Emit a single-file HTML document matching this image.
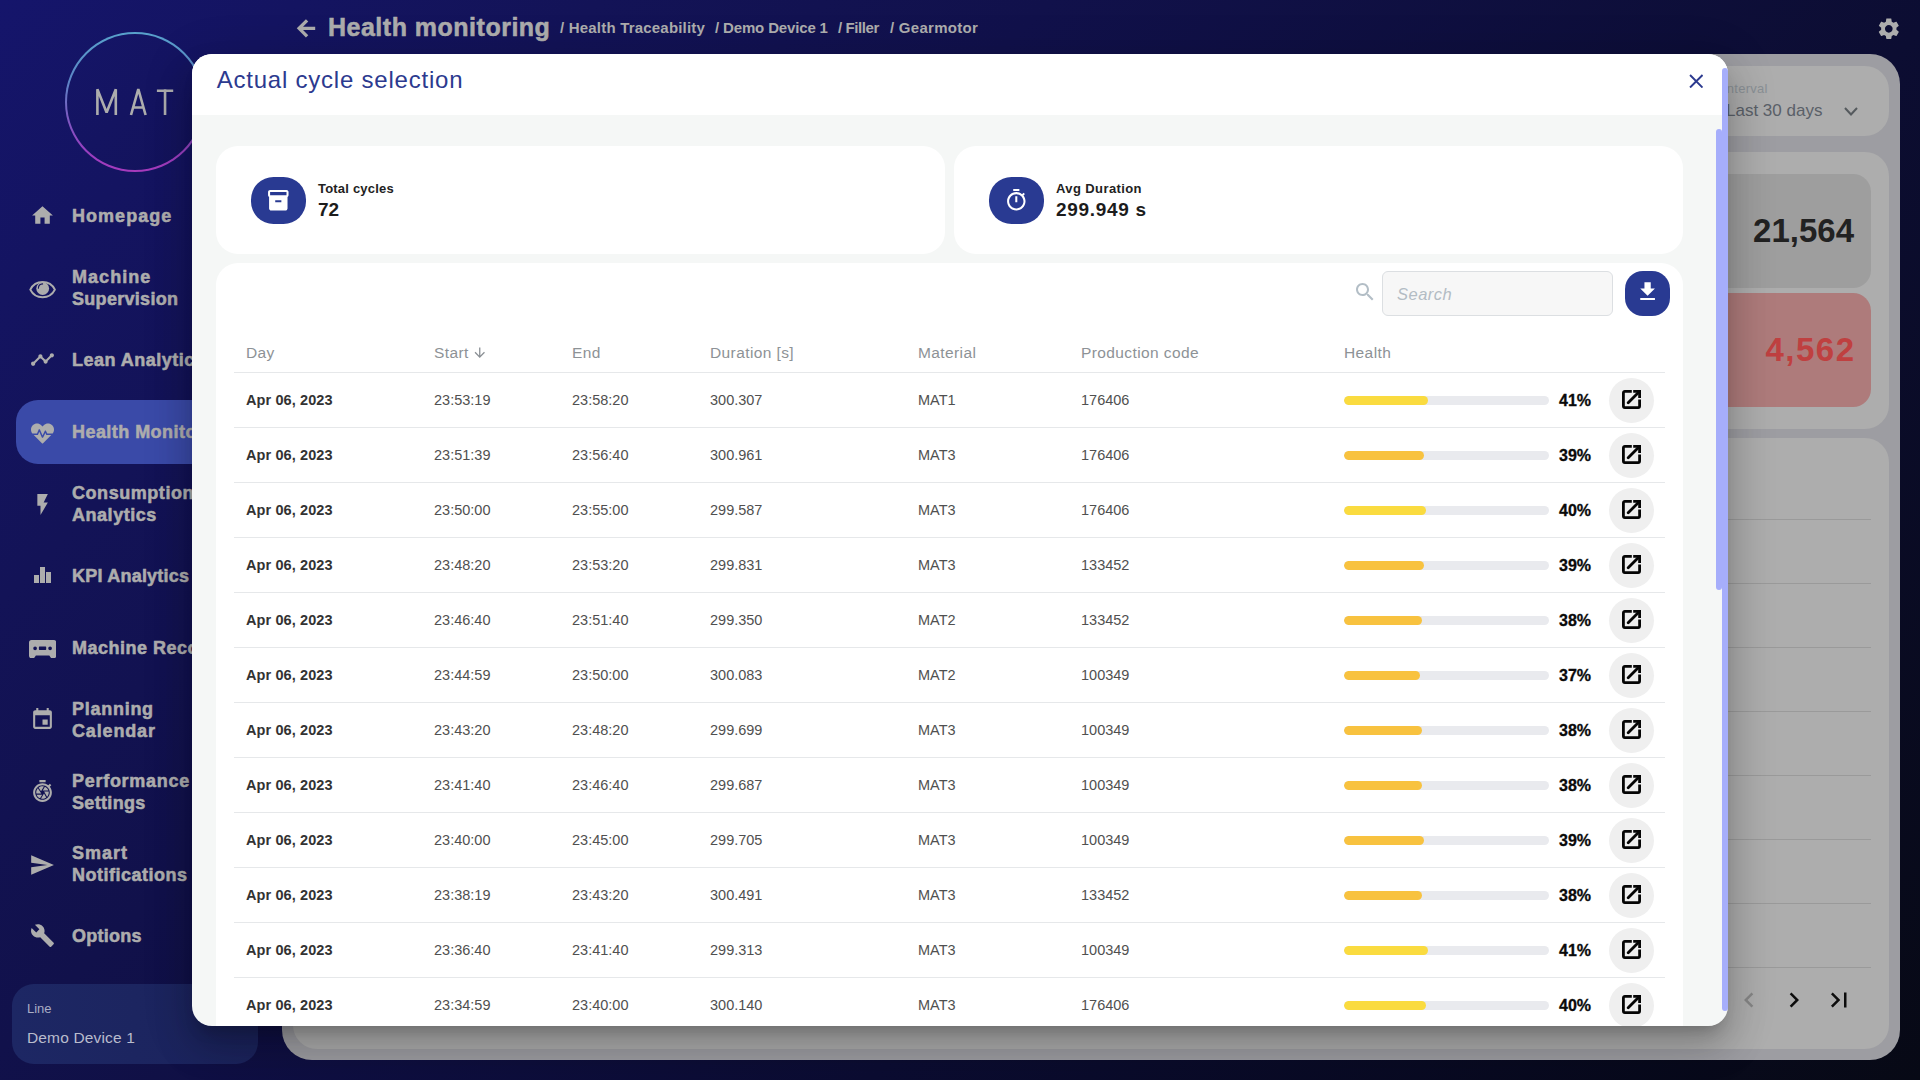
<!DOCTYPE html>
<html lang="en">
<head>
<meta charset="utf-8">
<title>Health monitoring</title>
<style>
*{box-sizing:border-box;margin:0;padding:0}
html,body{width:1920px;height:1080px;overflow:hidden}
body{font-family:"Liberation Sans",sans-serif;position:relative;
 background:linear-gradient(135deg,#15156b 0%,#131357 20%,#11114b 35%,#0c0d32 65%,#070915 100%)}
svg{display:block}
/* sidebar */
.logo{position:absolute;left:65px;top:32px;width:140px;height:140px;border-radius:50%;
 background:linear-gradient(180deg,#58a2cc 0%,#5c86c6 35%,#7b5cc2 60%,#983fc0 85%,#a63abc 100%)}
.logo i{position:absolute;left:1.800px;top:1.800px;right:1.800px;bottom:1.800px;border-radius:50%;background:linear-gradient(135deg,#151568,#13135a)}
.mat{position:absolute;left:89px;top:80px;width:100px;height:40px}
.nav{position:absolute;left:16px;width:260px;height:64px;color:#adadad}
.nav.act{background:#3a4aa8;border-radius:22px}
.nav svg{position:absolute;left:13.500px;top:18.500px;width:25px;height:25px;fill:#adadad}
.nav svg.equalizer{left:14px;top:19px;width:24px;height:24px}
.nav svg.eye{left:12.900px;top:24.800px;width:27.200px;height:18px}
.nav svg.heart{left:15px;top:21.500px;width:23px;height:23px}
.nav svg.flash{left:13.650px;top:19.900px;width:25.200px;height:25.200px}
.nav svg.send{left:12.860px;top:20.350px;width:26px;height:26px}
.nav svg.home{left:14.300px}
.nav svg.tape{left:12.900px;top:23.900px;width:27.200px;height:18.300px}
.nav u{text-decoration:none}
.nav b{position:absolute;left:56px;white-space:nowrap;font-weight:700;font-size:18px;line-height:22px;-webkit-text-stroke:.55px #adadad}
.nav b.one{top:21px}
.nav b.two{top:10px}
.line{position:absolute;left:12px;top:984px;width:246px;height:80px;border-radius:22px;background:linear-gradient(90deg,#1d2764,#1b235c)}
.line small{position:absolute;left:15px;top:17px;font-size:13px;color:#a9adc4}
.line span{position:absolute;left:15px;top:45px;font-size:15.500px;letter-spacing:.15px;color:#b9bccd;white-space:nowrap}
/* topbar */
.top{position:absolute;left:0;top:0;height:54px;width:1920px;color:#adadad}
.top svg{position:absolute;fill:#adadad}
.top h1{position:absolute;left:328px;top:12px;font-size:25px;line-height:30px;font-weight:700;white-space:nowrap;letter-spacing:.5px;-webkit-text-stroke:.55px #adadad}
.top .bc{position:absolute;top:19px;font-size:15px;line-height:18px;font-weight:700;white-space:nowrap}
/* dimmed main */
.main{position:absolute;left:282px;top:54px;width:1618px;height:1006px;border-radius:30px;background:#9d9da2}
.card{position:absolute;background:#adadad;border-radius:24px}
.card svg{position:absolute;width:30px;height:30px}
.ilab{position:absolute;left:1430px;top:15px;font-size:13px;color:#8a9095;letter-spacing:.25px}
.ival{position:absolute;left:1433px;top:35px;font-size:17px;color:#5a6068;white-space:nowrap}
.card svg.ichev{left:1551px;top:41px;width:14px;height:9px}
.kpi{position:absolute;left:1000px;width:578px;height:114px;border-radius:18px}
.kpi.g{top:22px;background:#9e9e9e}
.kpi.r{top:141px;background:#ae7b7b}
.kpi b{position:absolute;right:17px;top:37px;font-size:33px;line-height:40px;font-weight:700;color:#222;white-space:nowrap}
.kpi.r b{color:#bf4040;letter-spacing:1.500px;right:15.500px}
.pl{position:absolute;left:0;width:1578px;height:1px;background:#9a9a9a}
/* modal */
.mshadow{position:absolute;left:192px;top:54px;width:1536px;height:972px;border-radius:20px;box-shadow:0 11px 15px -7px rgba(0,0,0,.2),0 24px 38px 3px rgba(0,0,0,.14),0 9px 46px 8px rgba(0,0,0,.12)}
.modal{position:absolute;left:192px;top:54px;width:1536px;height:972px;border-radius:20px;background:#f5f7f6;overflow:hidden}
.mhead{position:absolute;left:0;top:0;width:100%;height:61px;background:#fff}
.mhead h2{position:absolute;left:24.700px;top:11px;font-size:24px;line-height:30px;font-weight:400;color:#2c3a8f;white-space:nowrap;letter-spacing:.78px}
.mhead svg.x{position:absolute;left:1496.600px;top:19.700px;width:14.600px;height:14.600px}
.stat{position:absolute;top:92px;width:729px;height:108px;background:#fff;border-radius:22px}
.stat .ic{position:absolute;left:35px;top:31px;width:55px;height:47px;border-radius:22.500px;background:#293a92}
.stat .ic svg{position:absolute;left:15.200px;top:11px;width:24.600px;height:24.600px;fill:#fff}
.stat .t{position:absolute;left:102px;top:35px;font-size:13px;line-height:16px;font-weight:700;color:#222;white-space:nowrap;letter-spacing:.2px}
.stat .v{position:absolute;left:102px;top:53px;font-size:19px;line-height:22px;font-weight:700;color:#1c1c1c;white-space:nowrap}
.stat .v.w{letter-spacing:.7px}
.stat .t.w{letter-spacing:.4px}
.tbl{position:absolute;left:24px;top:209px;width:1467px;height:800px;background:#fff;border-radius:22px 22px 0 0}
.inp{position:absolute;left:1166px;top:8px;width:231px;height:45px;border:1px solid #dcdfe2;border-radius:6px;background:#f7f7f7}
.inp em{position:absolute;left:14px;top:11.600px;letter-spacing:.5px;font-size:16.500px;line-height:20px;color:#b3bcc4;font-style:italic}
.dl{position:absolute;left:1409px;top:8px;width:45px;height:45px;border-radius:18px;background:#293a92}
.dl svg{position:absolute;left:10.100px;top:8.300px;width:25.200px;height:25.200px;fill:#fff}
.hr{position:absolute;left:18px;width:1431px;height:1px;background:#e6e8ea}
.th{position:absolute;top:81px;font-size:15.500px;line-height:18px;color:#8d9296;white-space:nowrap;letter-spacing:.4px}
.row{position:absolute;left:0;width:1467px;height:55px}
.row span{position:absolute;top:18px;font-size:14.5px;line-height:18px;color:#505050;white-space:nowrap}
.row .d{left:30px;font-weight:700;color:#333;letter-spacing:.1px}
.row .bar{position:absolute;left:1128px;top:23px;width:205px;height:9px;border-radius:5px;background:#e9eaee;overflow:hidden}
.row .bar i{position:absolute;left:0;top:0;height:9px;border-radius:5px}
.row .p{left:1343px;top:19px;font-weight:700;font-size:16px;color:#0a0a0a;-webkit-text-stroke:.3px #0a0a0a}
.row .btn{position:absolute;left:1393px;top:5px;width:45px;height:45px;border-radius:50%;background:#efefef}
.row .btn svg{position:absolute;left:13px;top:11.700px;width:19px;height:19px}
.sb1{position:absolute;left:1722px;top:68px;width:6px;height:943px;border-radius:3px;background:#a6aefb}
.sb2{position:absolute;left:1524px;top:75px;width:6px;height:461px;border-radius:3px;background:#a6aefb}

</style>
</head>
<body>
<div class="logo"><i></i></div><svg class="mat" viewBox="0 0 100 40"><path d="M8.400 35V9.200L17.600 32.500 26.800 9.200V35M42 35L49.300 9.200 56.600 35M44.300 27.500H54.300M67.900 10.700H84.200M76.050 9.200V35" fill="none" stroke="#adadad" stroke-width="2.600" stroke-linejoin="bevel"/></svg>
<div class="nav" style="top:184px"><svg class="home" viewBox="0 0 24 24" style=""><path d="M10 20v-6h4v6h5v-8h3L12 3 2 12h3v8z"/></svg><b class="one" style="letter-spacing:1.04px">Homepage</b></div>
<div class="nav" style="top:256px"><svg class="fa eye" viewBox="0 0 27.200 18"><path d="M1.300 8.600A13.760 13.760 0 0 1 25.900 8.600A13.760 13.760 0 0 1 1.300 8.600z" fill="none" stroke="#adadad" stroke-width="2" stroke-linejoin="round"/><circle cx="13.700" cy="7.500" r="6.400" stroke="none"/><path d="M9.400 7.200A4.400 4.400 0 0 1 13.600 2.900" fill="none" stroke="#14145c" stroke-width="1.100" stroke-linecap="round"/></svg><b class="two"><u style="letter-spacing:1.05px">Machine</u><br><u style="letter-spacing:0.3px">Supervision</u></b></div>
<div class="nav" style="top:328px"><svg class="timeline" viewBox="0 0 24 24" style=""><path d="M23 8c0 1.1-.9 2-2 2-.18 0-.35-.02-.51-.07l-3.56 3.55c.05.16.07.34.07.52 0 1.1-.9 2-2 2s-2-.9-2-2c0-.18.02-.36.07-.52l-2.55-2.55c-.16.05-.34.07-.52.07s-.36-.02-.52-.07l-4.55 4.56c.05.16.07.33.07.51 0 1.1-.9 2-2 2s-2-.9-2-2 .9-2 2-2c.18 0 .35.02.51.07l4.56-4.55C8.020 9.360 8 9.180 8 9c0-1.100.900-2 2-2s2 .900 2 2c0 .180-.020.360-.070.520l2.550 2.550c.160-.050.340-.070.520-.070s.360.020.520.070l3.550-3.560C19.020 8.350 19 8.180 19 8c0-1.100.900-2 2-2s2 .900 2 2z"/></svg><b class="one" style="letter-spacing:0.5px">Lean Analytics</b></div>
<div class="nav act" style="top:400px"><svg class="fa heart" viewBox="0 0 512 512"><path d="M320.200 243.800l-49.700 99.400c-6 12.100-23.400 11.700-28.900-.600l-56.900-126.300-30 71.700H60.600l182.500 186.500c7.100 7.300 18.600 7.300 25.700 0L451.400 288H342.300l-22.100-44.200zM473.700 73.900l-2.400-2.500c-51.500-52.600-135.800-52.600-187.400 0L256 100l-27.900-28.500c-51.500-52.700-135.900-52.700-187.400 0l-2.400 2.400C-10.400 123.700-12.500 203 31 256h102.400l35.900-86.200c5.400-12.900 23.600-13.200 29.400-.400l58.200 129.300 49-97.900c5.900-11.800 22.700-11.800 28.600 0l27.600 55.200H481c43.500-53 41.400-132.300-7.300-182.100z"/></svg><b class="one" style="letter-spacing:0.45px">Health Monitoring</b></div>
<div class="nav" style="top:472px"><svg class="flash" viewBox="0 0 24 24" style=""><path d="M7 2v11h3v9l7-12h-4l4-8z"/></svg><b class="two"><u style="letter-spacing:0.55px">Consumption</u><br><u style="letter-spacing:0.54px">Analytics</u></b></div>
<div class="nav" style="top:544px"><svg class="equalizer" viewBox="0 0 24 24" style=""><path d="M4 12h5v8H4zM10 4h5v16h-5zM16 9h5v11h-5z"/></svg><b class="one" style="letter-spacing:0.22px">KPI Analytics</b></div>
<div class="nav" style="top:616px"><svg class="fa tape" viewBox="0 0 27.200 18.300"><path fill-rule="evenodd" d="M2.500 0H24.700A2.500 2.500 0 0 1 27.200 2.500V15.800A2.500 2.500 0 0 1 24.700 18.300H23a1.500 1.500 0 0 1-1.300-.8L20.300 15.500H6.900L5.500 17.500a1.500 1.500 0 0 1-1.300.8H2.500A2.500 2.500 0 0 1 0 15.800V2.500A2.500 2.500 0 0 1 2.500 0zM6.100 6.450a1.850 1.850 0 1 0 0 3.700 1.850 1.850 0 0 0 0-3.700zM21.100 6.450a1.850 1.850 0 1 0 0 3.700 1.850 1.850 0 0 0 0-3.700zM10.500 6.600h6.100a.6.600 0 0 1 .6.600v2.150a.6.600 0 0 1-.6.600h-6.100a.6.600 0 0 1-.6-.6V7.200a.6.600 0 0 1 .6-.6z"/></svg><b class="one" style="letter-spacing:0.5px">Machine Recorder</b></div>
<div class="nav" style="top:688px"><svg class="event" viewBox="0 0 24 24" style=""><path d="M17 12h-5v5h5v-5zM16 1v2H8V1H6v2H5c-1.11 0-1.99.9-1.990 2L3 19c0 1.100.890 2 2 2h14c1.100 0 2-.900 2-2V5c0-1.100-.900-2-2-2h-1V1h-2zm3 18H5V8h14v11z"/></svg><b class="two"><u style="letter-spacing:0.73px">Planning</u><br><u style="letter-spacing:0.84px">Calendar</u></b></div>
<div class="nav" style="top:760px"><svg class="shutter" viewBox="0 0 24 24" style=""><path d="M15 1H9v2h6V1zm4.030 6.390l1.420-1.420c-.430-.510-.900-.990-1.410-1.410l-1.420 1.420C16.070 4.740 14.120 4 12 4c-4.970 0-9 4.030-9 9s4.020 9 9 9 9-4.030 9-9c0-2.120-.740-4.070-1.970-5.610zM12 20c-3.870 0-7-3.130-7-7s3.130-7 7-7 7 3.130 7 7-3.130 7-7 7zm-.320-5H6.350c.570 1.620 1.820 2.920 3.410 3.560l-.110-.060 2.030-3.500zm5.970-4c-.570-1.600-1.780-2.890-3.340-3.540L12.260 11h5.390zm-7.040 7.830c.450.110.910.170 1.390.170 1.340 0 2.570-.450 3.570-1.190l-2.110-3.900-2.850 4.920zM7.550 8.990C6.590 10.050 6 11.460 6 13c0 .340.040.670.090 1h4.720L7.550 8.990zm8.790 8.140C17.370 16.060 18 14.600 18 13c0-.340-.040-.670-.090-1h-4.340l2.770 5.130zm-3.010-9.980C12.900 7.060 12.460 7 12 7c-1.400 0-2.690.490-3.710 1.290l2.320 3.560 2.720-4.700z"/></svg><b class="two"><u style="letter-spacing:0.72px">Performance</u><br><u style="letter-spacing:0.33px">Settings</u></b></div>
<div class="nav" style="top:832px"><svg class="send" viewBox="0 0 24 24" style=""><path d="M2.010 21L23 12 2.010 3 2 10l15 2-15 2z"/></svg><b class="two"><u style="letter-spacing:1.0px">Smart</u><br><u style="letter-spacing:0.5px">Notifications</u></b></div>
<div class="nav" style="top:904px"><svg class="build" viewBox="0 0 24 24" style=""><path d="M22.700 19l-9.100-9.100c.900-2.300.400-5-1.500-6.900-2-2-5-2.400-7.400-1.300L9 6 6 9 1.600 4.700C.400 7.100.900 10.100 2.900 12.100c1.900 1.900 4.600 2.400 6.900 1.500l9.100 9.100c.400.400 1 .400 1.400 0l2.300-2.300c.500-.400.500-1.100.100-1.400z"/></svg><b class="one" style="letter-spacing:0.25px">Options</b></div>
<div class="line"><small>Line</small><span>Demo Device 1</span></div>
<div class="top"><svg viewBox="0 0 32 32" style="left:290px;top:12px;width:32px;height:32px"><path d="M17.100 8.300L9.100 16.300 17.100 24.300M9.500 16.300H25.200" fill="none" stroke="#adadad" stroke-width="3.300"/></svg><h1>Health monitoring</h1><span class="bc" style="left:560px;letter-spacing:.2px">/ Health Traceability</span><span class="bc" style="left:715px;letter-spacing:-.15px">/ Demo Device 1</span><span class="bc" style="left:838px;letter-spacing:-.4px">/ Filler</span><span class="bc" style="left:890px;letter-spacing:.27px">/ Gearmotor</span><svg viewBox="0 0 24 24" style="left:1875.600px;top:15.500px;width:25.600px;height:25.600px"><path d="M19.140 12.940c.040-.300.060-.610.060-.940 0-.320-.020-.640-.070-.940l2.030-1.580c.180-.140.230-.410.120-.610l-1.920-3.320c-.120-.220-.370-.290-.590-.220l-2.390.960c-.500-.380-1.030-.700-1.620-.940l-.360-2.540c-.040-.240-.240-.410-.480-.410h-3.840c-.240 0-.430.170-.470.410l-.360 2.540c-.590.240-1.130.570-1.620.940l-2.390-.960c-.220-.080-.470 0-.590.220L2.740 8.870c-.120.210-.080.470.120.610l2.030 1.580c-.050.300-.090.630-.090.940s.020.640.070.940l-2.030 1.580c-.180.140-.230.410-.120.610l1.920 3.320c.120.220.370.290.590.220l2.390-.960c.500.380 1.030.700 1.620.940l.360 2.540c.050.240.240.410.480.410h3.840c.240 0 .440-.170.470-.410l.360-2.540c.590-.240 1.130-.560 1.620-.940l2.390.960c.220.080.470 0 .590-.220l1.920-3.320c.120-.220.070-.470-.120-.610l-2.010-1.580zM12 15.600c-1.980 0-3.600-1.620-3.600-3.600s1.620-3.600 3.600-3.600 3.600 1.620 3.600 3.600-1.620 3.600-3.600 3.600z"/></svg></div>
<div class="main">
<div class="card" style="left:11px;top:12px;width:1596px;height:70px"><small class="ilab">Interval</small><span class="ival">Last 30 days</span><svg class="ichev" viewBox="0 0 14 9"><path d="M1 1l6 6.500L13 1" fill="none" stroke="#555a5e" stroke-width="2"/></svg></div>
<div class="card" style="left:11px;top:98px;width:1596px;height:277px"><div class="kpi g"><b>21,564</b></div><div class="kpi r"><b>4,562</b></div></div>
<div class="card" style="left:11px;top:384px;width:1596px;height:611px">
<i class="pl" style="top:81px"></i>
<i class="pl" style="top:145px"></i>
<i class="pl" style="top:209px"></i>
<i class="pl" style="top:273px"></i>
<i class="pl" style="top:337px"></i>
<i class="pl" style="top:401px"></i>
<i class="pl" style="top:465px"></i>
<i class="pl" style="top:529px"></i>
<svg viewBox="0 0 24 24" style="left:1441px;top:547px;fill:#868686"><path d="M15.410 7.410L14 6l-6 6 6 6 1.410-1.410L10.830 12z"/></svg><svg viewBox="0 0 24 24" style="left:1486px;top:547px;fill:#0c0c0c"><path d="M10 6L8.590 7.410 13.170 12l-4.580 4.590L10 18l6-6z"/></svg><svg viewBox="0 0 24 24" style="left:1531px;top:547px;fill:#0c0c0c"><path d="M5.590 7.410L10.180 12l-4.590 4.590L7 18l6-6-6-6zM16 6h2v12h-2z"/></svg>
</div></div>
<div class="mshadow"></div>
<div class="modal">
<div class="mhead"><h2>Actual cycle selection</h2><svg class="x" viewBox="0 0 14 14"><path d="M1 1l12 12M13 1L1 13" fill="none" stroke="#2c3a8f" stroke-width="1.850"/></svg></div>
<div class="stat" style="left:24px"><div class="ic"><svg viewBox="0 0 24 24" style=""><path d="M20 2H4c-1 0-2 .9-2 2v3.010c0 .720.430 1.340 1 1.690V20c0 1.100 1.100 2 2 2h14c.900 0 2-.900 2-2V8.700c.570-.350 1-.970 1-1.690V4c0-1.100-1-2-2-2zm-5 12H9v-2h6v2zm5-7H4V4h16v3z"/></svg></div><div class="t">Total cycles</div><div class="v">72</div></div>
<div class="stat" style="left:762px"><div class="ic"><svg viewBox="0 0 24 24" style=""><path d="M15 1H9v2h6V1zm-4 13h2V8h-2v6zm8.030-6.610l1.420-1.420c-.430-.510-.900-.990-1.410-1.410l-1.420 1.420C16.070 4.740 14.120 4 12 4c-4.970 0-9 4.030-9 9s4.020 9 9 9 9-4.030 9-9c0-2.120-.740-4.070-1.970-5.610zM12 20c-3.870 0-7-3.130-7-7s3.130-7 7-7 7 3.130 7 7-3.130 7-7 7z"/></svg></div><div class="t w">Avg Duration</div><div class="v w">299.949 s</div></div>
<div class="tbl">
<svg viewBox="0 0 24 24" style="position:absolute;left:1137px;top:17px;width:24px;height:24px;fill:#b3bec6"><path d="M15.500 14h-.790l-.280-.270C15.410 12.590 16 11.110 16 9.500 16 5.910 13.090 3 9.500 3S3 5.910 3 9.500 5.910 16 9.500 16c1.610 0 3.090-.590 4.230-1.570l.270.280v.790l5 4.990L20.490 19l-4.990-5zm-6 0C7.010 14 5 11.990 5 9.500S7.010 5 9.500 5 14 7.010 14 9.500 11.990 14 9.500 14z"/></svg>
<div class="inp"><em>Search</em></div>
<div class="dl"><svg viewBox="0 0 24 24" style=""><path d="M19 9h-4V3H9v6H5l7 7 7-7zM5 18v2h14v-2H5z"/></svg></div>
<span class="th" style="left:30px">Day</span>
<span class="th" style="left:218px">Start</span>
<span class="th" style="left:356px">End</span>
<span class="th" style="left:494px">Duration [s]</span>
<span class="th" style="left:702px">Material</span>
<span class="th" style="left:865px">Production code</span>
<span class="th" style="left:1128px">Health</span>
<svg viewBox="0 0 24 24" style="position:absolute;left:255.850px;top:82.250px;width:15.500px;height:15.500px;fill:#8a8f94"><path d="M20 12l-1.410-1.410L13 16.170V4h-2v12.170l-5.580-5.590L4 12l8 8 8-8z"/></svg>
<i class="hr" style="top:109px"></i>
<div class="row" style="top:110px"><span class="d">Apr 06, 2023</span><span style="left:218px">23:53:19</span><span style="left:356px">23:58:20</span><span style="left:494px">300.307</span><span style="left:702px">MAT1</span><span style="left:865px">176406</span><div class="bar"><i style="width:41%;background:#fadb3f"></i></div><span class="p">41%</span><div class="btn"><svg viewBox="0 0 19 19"><g fill="none" stroke="#050505" stroke-width="2.800"><path d="M9.800 1.400H2.900a1.500 1.500 0 0 0-1.500 1.500v13.200a1.500 1.500 0 0 0 1.500 1.500h13.200a1.500 1.500 0 0 0 1.500-1.500V9.500"/><path d="M11.200 1.400h6.400v6.500"/><path d="M6.200 12.800L17.200 1.800" stroke-linecap="round"/></g></svg></div></div>
<i class="hr" style="top:164px"></i>
<div class="row" style="top:165px"><span class="d">Apr 06, 2023</span><span style="left:218px">23:51:39</span><span style="left:356px">23:56:40</span><span style="left:494px">300.961</span><span style="left:702px">MAT3</span><span style="left:865px">176406</span><div class="bar"><i style="width:39%;background:#f8c23f"></i></div><span class="p">39%</span><div class="btn"><svg viewBox="0 0 19 19"><g fill="none" stroke="#050505" stroke-width="2.800"><path d="M9.800 1.400H2.900a1.500 1.500 0 0 0-1.500 1.500v13.200a1.500 1.500 0 0 0 1.500 1.500h13.200a1.500 1.500 0 0 0 1.500-1.500V9.500"/><path d="M11.200 1.400h6.400v6.500"/><path d="M6.200 12.800L17.200 1.800" stroke-linecap="round"/></g></svg></div></div>
<i class="hr" style="top:219px"></i>
<div class="row" style="top:220px"><span class="d">Apr 06, 2023</span><span style="left:218px">23:50:00</span><span style="left:356px">23:55:00</span><span style="left:494px">299.587</span><span style="left:702px">MAT3</span><span style="left:865px">176406</span><div class="bar"><i style="width:40%;background:#fadb3f"></i></div><span class="p">40%</span><div class="btn"><svg viewBox="0 0 19 19"><g fill="none" stroke="#050505" stroke-width="2.800"><path d="M9.800 1.400H2.900a1.500 1.500 0 0 0-1.500 1.500v13.200a1.500 1.500 0 0 0 1.500 1.500h13.200a1.500 1.500 0 0 0 1.500-1.500V9.500"/><path d="M11.200 1.400h6.400v6.500"/><path d="M6.200 12.800L17.200 1.800" stroke-linecap="round"/></g></svg></div></div>
<i class="hr" style="top:274px"></i>
<div class="row" style="top:275px"><span class="d">Apr 06, 2023</span><span style="left:218px">23:48:20</span><span style="left:356px">23:53:20</span><span style="left:494px">299.831</span><span style="left:702px">MAT3</span><span style="left:865px">133452</span><div class="bar"><i style="width:39%;background:#f8c23f"></i></div><span class="p">39%</span><div class="btn"><svg viewBox="0 0 19 19"><g fill="none" stroke="#050505" stroke-width="2.800"><path d="M9.800 1.400H2.900a1.500 1.500 0 0 0-1.500 1.500v13.200a1.500 1.500 0 0 0 1.500 1.500h13.200a1.500 1.500 0 0 0 1.500-1.500V9.500"/><path d="M11.200 1.400h6.400v6.500"/><path d="M6.200 12.800L17.200 1.800" stroke-linecap="round"/></g></svg></div></div>
<i class="hr" style="top:329px"></i>
<div class="row" style="top:330px"><span class="d">Apr 06, 2023</span><span style="left:218px">23:46:40</span><span style="left:356px">23:51:40</span><span style="left:494px">299.350</span><span style="left:702px">MAT2</span><span style="left:865px">133452</span><div class="bar"><i style="width:38%;background:#f8c23f"></i></div><span class="p">38%</span><div class="btn"><svg viewBox="0 0 19 19"><g fill="none" stroke="#050505" stroke-width="2.800"><path d="M9.800 1.400H2.900a1.500 1.500 0 0 0-1.500 1.500v13.200a1.500 1.500 0 0 0 1.500 1.500h13.200a1.500 1.500 0 0 0 1.500-1.500V9.500"/><path d="M11.200 1.400h6.400v6.500"/><path d="M6.200 12.800L17.200 1.800" stroke-linecap="round"/></g></svg></div></div>
<i class="hr" style="top:384px"></i>
<div class="row" style="top:385px"><span class="d">Apr 06, 2023</span><span style="left:218px">23:44:59</span><span style="left:356px">23:50:00</span><span style="left:494px">300.083</span><span style="left:702px">MAT2</span><span style="left:865px">100349</span><div class="bar"><i style="width:37%;background:#f8c23f"></i></div><span class="p">37%</span><div class="btn"><svg viewBox="0 0 19 19"><g fill="none" stroke="#050505" stroke-width="2.800"><path d="M9.800 1.400H2.900a1.500 1.500 0 0 0-1.500 1.500v13.200a1.500 1.500 0 0 0 1.500 1.500h13.200a1.500 1.500 0 0 0 1.500-1.500V9.500"/><path d="M11.200 1.400h6.400v6.500"/><path d="M6.200 12.800L17.200 1.800" stroke-linecap="round"/></g></svg></div></div>
<i class="hr" style="top:439px"></i>
<div class="row" style="top:440px"><span class="d">Apr 06, 2023</span><span style="left:218px">23:43:20</span><span style="left:356px">23:48:20</span><span style="left:494px">299.699</span><span style="left:702px">MAT3</span><span style="left:865px">100349</span><div class="bar"><i style="width:38%;background:#f8c23f"></i></div><span class="p">38%</span><div class="btn"><svg viewBox="0 0 19 19"><g fill="none" stroke="#050505" stroke-width="2.800"><path d="M9.800 1.400H2.900a1.500 1.500 0 0 0-1.500 1.500v13.200a1.500 1.500 0 0 0 1.500 1.500h13.200a1.500 1.500 0 0 0 1.500-1.500V9.500"/><path d="M11.200 1.400h6.400v6.500"/><path d="M6.200 12.800L17.200 1.800" stroke-linecap="round"/></g></svg></div></div>
<i class="hr" style="top:494px"></i>
<div class="row" style="top:495px"><span class="d">Apr 06, 2023</span><span style="left:218px">23:41:40</span><span style="left:356px">23:46:40</span><span style="left:494px">299.687</span><span style="left:702px">MAT3</span><span style="left:865px">100349</span><div class="bar"><i style="width:38%;background:#f8c23f"></i></div><span class="p">38%</span><div class="btn"><svg viewBox="0 0 19 19"><g fill="none" stroke="#050505" stroke-width="2.800"><path d="M9.800 1.400H2.900a1.500 1.500 0 0 0-1.500 1.500v13.200a1.500 1.500 0 0 0 1.500 1.500h13.200a1.500 1.500 0 0 0 1.500-1.500V9.500"/><path d="M11.200 1.400h6.400v6.500"/><path d="M6.200 12.800L17.200 1.800" stroke-linecap="round"/></g></svg></div></div>
<i class="hr" style="top:549px"></i>
<div class="row" style="top:550px"><span class="d">Apr 06, 2023</span><span style="left:218px">23:40:00</span><span style="left:356px">23:45:00</span><span style="left:494px">299.705</span><span style="left:702px">MAT3</span><span style="left:865px">100349</span><div class="bar"><i style="width:39%;background:#f8c23f"></i></div><span class="p">39%</span><div class="btn"><svg viewBox="0 0 19 19"><g fill="none" stroke="#050505" stroke-width="2.800"><path d="M9.800 1.400H2.900a1.500 1.500 0 0 0-1.500 1.500v13.200a1.500 1.500 0 0 0 1.500 1.500h13.200a1.500 1.500 0 0 0 1.500-1.500V9.500"/><path d="M11.200 1.400h6.400v6.500"/><path d="M6.200 12.800L17.200 1.800" stroke-linecap="round"/></g></svg></div></div>
<i class="hr" style="top:604px"></i>
<div class="row" style="top:605px"><span class="d">Apr 06, 2023</span><span style="left:218px">23:38:19</span><span style="left:356px">23:43:20</span><span style="left:494px">300.491</span><span style="left:702px">MAT3</span><span style="left:865px">133452</span><div class="bar"><i style="width:38%;background:#f8c23f"></i></div><span class="p">38%</span><div class="btn"><svg viewBox="0 0 19 19"><g fill="none" stroke="#050505" stroke-width="2.800"><path d="M9.800 1.400H2.900a1.500 1.500 0 0 0-1.500 1.500v13.200a1.500 1.500 0 0 0 1.500 1.500h13.200a1.500 1.500 0 0 0 1.500-1.500V9.500"/><path d="M11.200 1.400h6.400v6.500"/><path d="M6.200 12.800L17.200 1.800" stroke-linecap="round"/></g></svg></div></div>
<i class="hr" style="top:659px"></i>
<div class="row" style="top:660px"><span class="d">Apr 06, 2023</span><span style="left:218px">23:36:40</span><span style="left:356px">23:41:40</span><span style="left:494px">299.313</span><span style="left:702px">MAT3</span><span style="left:865px">100349</span><div class="bar"><i style="width:41%;background:#fadb3f"></i></div><span class="p">41%</span><div class="btn"><svg viewBox="0 0 19 19"><g fill="none" stroke="#050505" stroke-width="2.800"><path d="M9.800 1.400H2.900a1.500 1.500 0 0 0-1.500 1.500v13.200a1.500 1.500 0 0 0 1.500 1.500h13.200a1.500 1.500 0 0 0 1.500-1.500V9.500"/><path d="M11.200 1.400h6.400v6.500"/><path d="M6.200 12.800L17.200 1.800" stroke-linecap="round"/></g></svg></div></div>
<i class="hr" style="top:714px"></i>
<div class="row" style="top:715px"><span class="d">Apr 06, 2023</span><span style="left:218px">23:34:59</span><span style="left:356px">23:40:00</span><span style="left:494px">300.140</span><span style="left:702px">MAT3</span><span style="left:865px">176406</span><div class="bar"><i style="width:40%;background:#fadb3f"></i></div><span class="p">40%</span><div class="btn"><svg viewBox="0 0 19 19"><g fill="none" stroke="#050505" stroke-width="2.800"><path d="M9.800 1.400H2.900a1.500 1.500 0 0 0-1.500 1.500v13.200a1.500 1.500 0 0 0 1.500 1.500h13.200a1.500 1.500 0 0 0 1.500-1.500V9.500"/><path d="M11.200 1.400h6.400v6.500"/><path d="M6.200 12.800L17.200 1.800" stroke-linecap="round"/></g></svg></div></div>
<i class="hr" style="top:769px"></i>
</div>
<i class="sb2"></i>
</div>
<i class="sb1"></i>
</body>
</html>
